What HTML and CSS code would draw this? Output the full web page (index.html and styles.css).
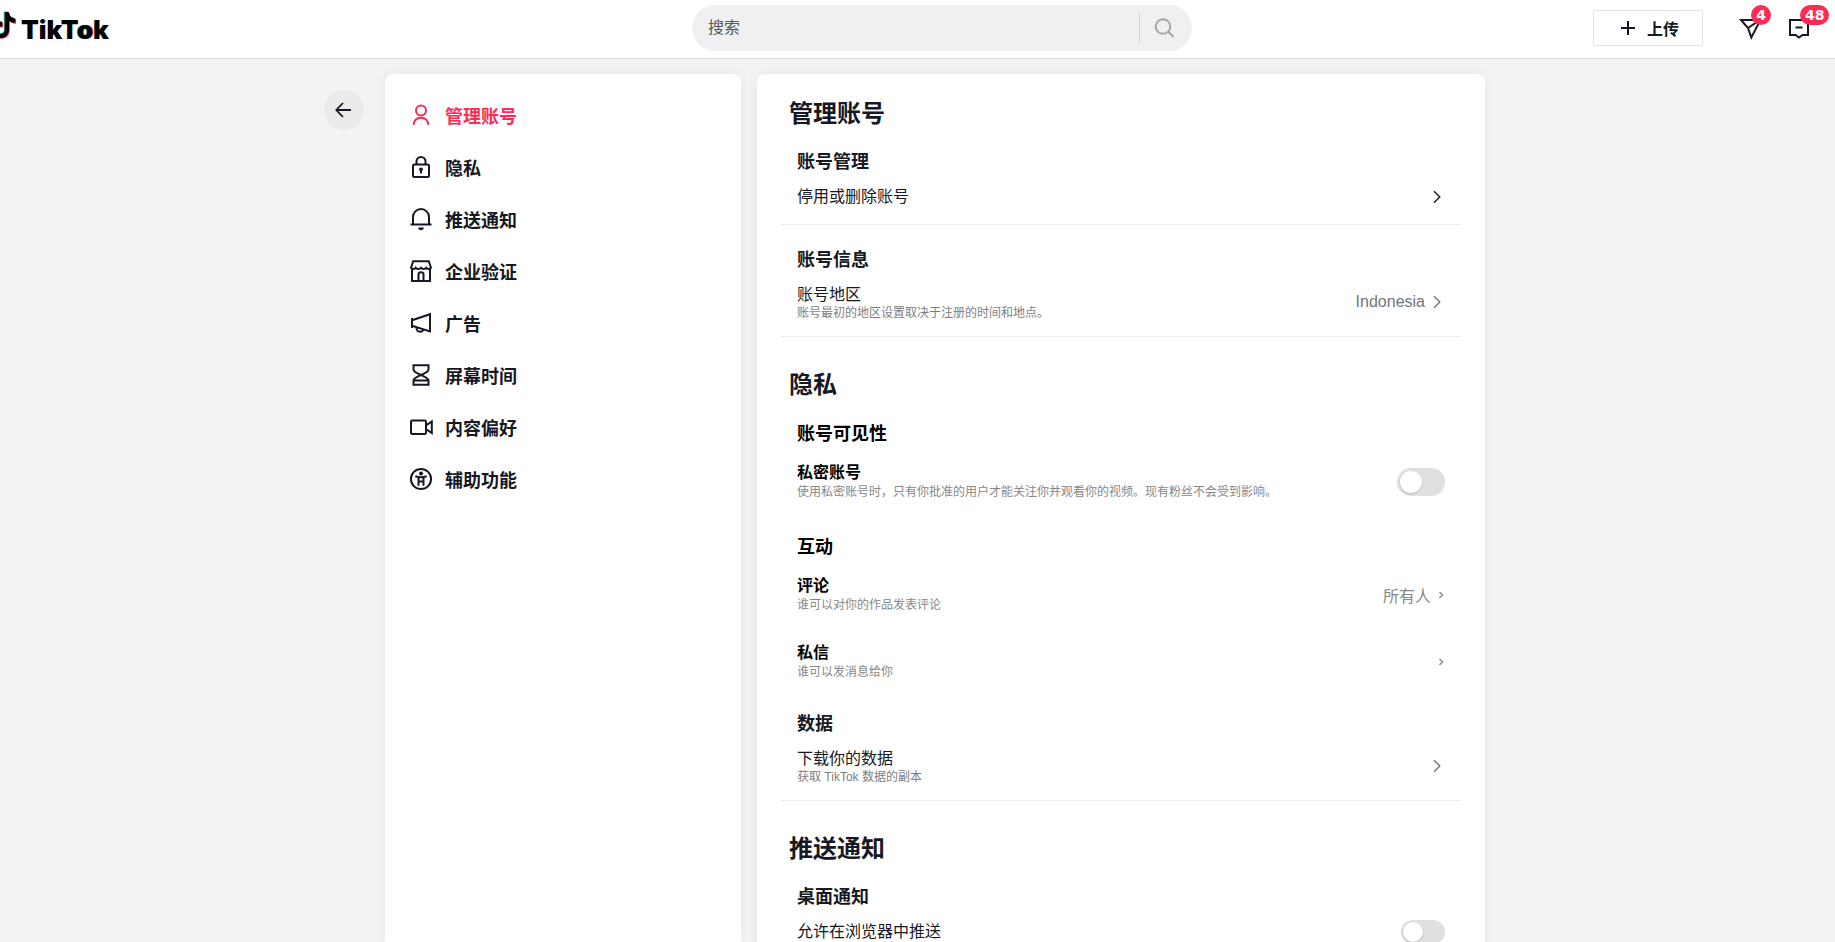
FILE: index.html
```html
<!DOCTYPE html>
<html lang="zh-CN">
<head>
    <meta charset="UTF-8">
    <meta name="viewport" content="width=device-width, initial-scale=1.0">
    <title>TikTok</title>
    <link rel="stylesheet" href="styles.css">
</head>
<body>
    <header class="header">
        <a class="logo" href="#" aria-label="TikTok">
            <svg class="logo-note" viewBox="-1 -1 26 26" aria-hidden="true">
                <defs>
                    <path id="note" d="M12.525.02c1.31-.02 2.61-.01 3.91-.02.08 1.53.63 3.09 1.75 4.17 1.12 1.11 2.7 1.62 4.24 1.79v4.03c-1.44-.05-2.89-.35-4.2-.97-.57-.26-1.1-.59-1.62-.93-.01 2.92.01 5.84-.02 8.75-.08 1.4-.54 2.79-1.35 3.94-1.31 1.92-3.58 3.17-5.91 3.21-1.43.08-2.86-.31-4.08-1.03-2.02-1.19-3.44-3.37-3.65-5.71-.02-.5-.03-1-.01-1.49.18-1.9 1.12-3.72 2.58-4.96 1.66-1.44 3.98-2.13 6.15-1.72.02 1.48-.04 2.96-.04 4.44-.99-.32-2.15-.23-3.02.37-.63.41-1.11 1.04-1.36 1.75-.21.51-.15 1.07-.14 1.61.24 1.64 1.82 3.02 3.5 2.87 1.12-.01 2.19-.66 2.77-1.61.19-.33.4-.67.41-1.06.1-1.79.06-3.57.07-5.36.01-4.03-.01-8.05.02-12.07z"/>
                </defs>
                <use href="#note" x="-0.8" y="-0.8" fill="#25f4ee"/>
                <use href="#note" x="0.8" y="0.8" fill="#fe2c55"/>
                <use href="#note" fill="#000"/>
            </svg>
            <span class="logo-text">TikT<span class="logo-o">o</span>k</span>
        </a>

        <form class="search">
            <input class="search-input" type="search" placeholder="搜索" aria-label="搜索">
            <button class="search-btn" type="button" aria-label="搜索">
                <svg width="24" height="24" viewBox="0 0 24 24" fill="none" stroke="currentColor" stroke-width="2"><circle cx="10" cy="10.5" r="7.3"/><path d="M15.3 15.8l5.2 5.2"/></svg>
            </button>
        </form>

        <div class="actions">
            <button class="upload-btn" type="button">
                <svg width="14" height="14" viewBox="0 0 14 14" stroke="currentColor" stroke-width="2"><path d="M7 0v14M0 7h14"/></svg>
                上传
            </button>
            <a class="action" href="#" aria-label="私信">
                <svg width="24" height="24" viewBox="0 0 24 24" fill="none" stroke="currentColor" stroke-width="2"><path d="M3 4h19.5L13.3 21.5 10 12z"/><path d="M10 12l12-8"/></svg>
                <span class="badge">4</span>
            </a>
            <a class="action" href="#" aria-label="收件箱">
                <svg width="24" height="24" viewBox="0 0 24 24" fill="none" stroke="currentColor" stroke-width="2"><path d="M3 4h18v15h-5.5L12 21.5 8.5 19H3z"/><path d="M8.5 11.5h7"/></svg>
                <span class="badge">48</span>
            </a>
        </div>
    </header>

    <main class="page">
        <button class="back-btn" type="button" aria-label="返回">
            <svg width="18" height="18" viewBox="0 0 18 18" fill="none" stroke="currentColor" stroke-width="1.8"><path d="M8 2L1.300 9 8 16M1.500 9H16"/></svg>
        </button>

        <nav class="sidebar card">
            <a class="nav-item active" href="#account">
                <svg class="nav-icon" viewBox="0 0 24 24"><circle cx="12" cy="7.5" r="5"/><path d="M4.500 21.800c.6-4.400 3.500-7 7.500-7s6.900 2.600 7.500 7"/></svg>
                管理账号
            </a>
            <a class="nav-item" href="#privacy">
                <svg class="nav-icon" viewBox="0 0 24 24"><rect x="4" y="9.500" width="16" height="12.500" rx="1.500"/><path d="M7.500 9.500V6.500a4.500 4.500 0 0 1 9 0v3"/><circle class="solid" cx="12" cy="14.300" r="1.900"/><path d="M12 14.500v4"/></svg>
                隐私
            </a>
            <a class="nav-item" href="#push">
                <svg class="nav-icon" viewBox="0 0 24 24"><path d="M1.500 17.500h21M4 17.500V10a8 8 0 0 1 16 0v7.500"/><path class="solid" d="M9 20.500h6c-.4 1.800-1.500 2.700-3 2.700s-2.600-.9-3-2.700z"/></svg>
                推送通知
            </a>
            <a class="nav-item" href="#business">
                <svg class="nav-icon" viewBox="0 0 24 24"><path d="M4.200 2.200h15.600l2.200 6.600c-.8 1.600-3.600 1.800-4.700 0-1 1.600-4.200 1.600-5.300 0-1.100 1.600-4.300 1.600-5.300 0-1.100 1.800-3.900 1.600-4.700 0z"/><path d="M3 9v13h18V9M9.500 22v-6.500c0-1.400 1-2.300 2.500-2.300s2.500.9 2.500 2.300V22"/></svg>
                企业验证
            </a>
            <a class="nav-item" href="#ads">
                <svg class="nav-icon" viewBox="0 0 24 24"><path d="M3 9.200L21 3.200v17.300L3 14.800zM3 7v10"/><path d="M7.500 16.400c-.3 2.700 1.200 4.300 3.800 4.300 1.500 0 2.500-.7 3-1.900"/></svg>
                广告
            </a>
            <a class="nav-item" href="#screen-time">
                <svg class="nav-icon" viewBox="0 0 24 24"><path d="M4.500 2.200h15v4.300c0 2.500-3.500 3.700-7.500 5.500-4-1.800-7.500-3-7.500-5.500z"/><path d="M4.500 21.800h15v-4.300c0-2.500-3.500-3.700-7.500-5.500-4 1.800-7.500 3-7.500 5.500zM4.500 17.500h15"/></svg>
                屏幕时间
            </a>
            <a class="nav-item" href="#content">
                <svg class="nav-icon" viewBox="0 0 24 24"><rect x="2" y="5.500" width="15" height="13.500" rx="1.200"/><path d="M17 10.500l5.800-4v11.500L17 14"/></svg>
                内容偏好
            </a>
            <a class="nav-item" href="#accessibility">
                <svg class="nav-icon" viewBox="0 0 24 24"><circle cx="12" cy="12" r="10.100"/><circle class="solid" cx="12" cy="6.500" r="2"/><path d="M6.300 9.300c3.500 1.200 7.900 1.200 11.400 0M9.500 10v8.800M14.500 10v8.800M9.500 14.500h5"/></svg>
                辅助功能
            </a>
        </nav>

        <div class="content card">
            <section id="account">
                <h1 class="title">管理账号</h1>
                <div class="group">
                    <h2 class="subtitle">账号管理</h2>
                    <a class="row" href="#">
                        <span class="row-name">停用或删除账号</span>
                        <span class="control dark">
                            <svg class="chevron" viewBox="0 0 16 16"><path d="M5 2.200L10.800 8 5 13.800"/></svg>
                        </span>
                    </a>
                </div>
                <div class="group">
                    <h2 class="subtitle">账号信息</h2>
                    <a class="row" href="#">
                        <span class="row-text">
                            <span class="row-name">账号地区</span>
                            <span class="row-desc">账号最初的地区设置取决于注册的时间和地点。</span>
                        </span>
                        <span class="control">Indonesia
                            <svg class="chevron" viewBox="0 0 16 16"><path d="M5 2.200L10.800 8 5 13.800"/></svg>
                        </span>
                    </a>
                </div>
            </section>

            <section id="privacy">
                <h1 class="title">隐私</h1>
                <div class="privacy">
                    <div class="group">
                        <h2 class="subtitle">账号可见性</h2>
                        <div class="row">
                            <label class="row-text" for="private-account">
                                <span class="row-name">私密账号</span>
                                <span class="row-desc">使用私密账号时，只有你批准的用户才能关注你并观看你的视频。现有粉丝不会受到影响。</span>
                            </label>
                            <input class="switch control" type="checkbox" id="private-account">
                        </div>
                    </div>
                    <div class="group">
                        <h2 class="subtitle">互动</h2>
                        <a class="row" href="#">
                            <span class="row-text">
                                <span class="row-name">评论</span>
                                <span class="row-desc">谁可以对你的作品发表评论</span>
                            </span>
                            <span class="control">所有人
                                <svg class="chevron-small" viewBox="0 0 8 8"><path d="M2.500 1L5.500 4 2.500 7"/></svg>
                            </span>
                        </a>
                        <a class="row" href="#">
                            <span class="row-text">
                                <span class="row-name">私信</span>
                                <span class="row-desc">谁可以发消息给你</span>
                            </span>
                            <span class="control">
                                <svg class="chevron-small" viewBox="0 0 8 8"><path d="M2.500 1L5.500 4 2.500 7"/></svg>
                            </span>
                        </a>
                    </div>
                </div>
                <div class="group">
                    <h2 class="subtitle">数据</h2>
                    <a class="row" href="#">
                        <span class="row-text">
                            <span class="row-name">下载你的数据</span>
                            <span class="row-desc">获取 TikTok 数据的副本</span>
                        </span>
                        <span class="control">
                            <svg class="chevron" viewBox="0 0 16 16"><path d="M5 2.200L10.800 8 5 13.800"/></svg>
                        </span>
                    </a>
                </div>
            </section>

            <section id="push">
                <h1 class="title">推送通知</h1>
                <div class="group">
                    <h2 class="subtitle">桌面通知</h2>
                    <div class="row">
                        <label class="row-name" for="browser-push">允许在浏览器中推送</label>
                        <input class="switch switch-small" type="checkbox" id="browser-push">
                    </div>
                </div>
            </section>
        </div>
    </main>
</body>
</html>
```

FILE: styles.css
```css
* {
    box-sizing: border-box;
}

body {
    margin: 0;
    height: 100vh;
    display: flex;
    flex-direction: column;
    overflow: hidden;
    background-color: #f3f3f3;
    color: #161823;
    font-family: "Liberation Sans", "Noto Sans CJK SC", sans-serif;
    font-size: 16px;
}

a {
    color: inherit;
    text-decoration: none;
}

button, input {
    font: inherit;
    color: inherit;
}

button {
    border: none;
    padding: 0;
    cursor: pointer;
}

svg {
    display: block;
    flex-shrink: 0;
}

/* Header */
.header {
    display: grid;
    grid-template-columns: 1fr 500px 1fr;
    align-items: center;
    flex-shrink: 0;
    height: 59px;
    padding: 0 24px 2px 73px;
    background-color: #fff;
    border-bottom: 1px solid #d9d9d9;
}

.logo {
    display: flex;
    align-items: flex-start;
    gap: 3px;
    margin-left: -83px;
    color: #000;
}
.logo-note { width: 28px; height: 28px; }
.logo-text {
    font-family: Inter, sans-serif;
    font-size: 26px;
    font-weight: 900;
    line-height: 32px;
    padding-top: 3px;
}
.logo-o { text-shadow: -1px 0 #25f4ee, 1px 0 #fe2c55; }

.search {
    display: flex;
    align-items: center;
    height: 46px;
    border-radius: 23px;
    background-color: #f0f0f0;
    overflow: hidden;
}
.search-input {
    flex: 1;
    min-width: 0;
    height: 46px;
    padding: 0 16px;
    border: none;
    outline: none;
    background: transparent;
}
.search-input::placeholder { color: #55565e; }
.search-btn {
    display: flex;
    align-items: center;
    width: 53px;
    height: 28px;
    padding-left: 13px;
    border-left: 1px solid #d0d0d2;
    background: transparent;
    color: #a6a7ab;
}

.actions {
    display: flex;
    align-items: center;
    justify-content: flex-end;
}
.upload-btn {
    display: flex;
    align-items: center;
    justify-content: center;
    gap: 12px;
    width: 110px;
    height: 36px;
    margin-right: 10px;
    padding-left: 4px;
    border: 1px solid #e3e3e4;
    border-radius: 2px;
    background-color: #fff;
    font-weight: bold;
}
.action {
    position: relative;
    margin-left: 25px;
}
.badge {
    position: absolute;
    left: 13px;
    top: -11px;
    min-width: 20px;
    padding: 0 5px;
    border-radius: 10px;
    background-color: #fe2c55;
    color: #fff;
    font-family: "DejaVu Sans", sans-serif;
    font-size: 14px;
    font-weight: bold;
    line-height: 20px;
    text-align: center;
}

/* Page */
.page {
    display: flex;
    justify-content: center;
    flex: 1;
    min-height: 0;
    padding: 15px 26px 0 0;
    overflow-y: auto;
    scrollbar-width: none;
}

.back-btn {
    display: flex;
    align-items: center;
    justify-content: center;
    flex-shrink: 0;
    width: 40px;
    height: 40px;
    margin: 16px 21px 0 0;
    border-radius: 50%;
    background-color: #ebebeb;
}

.card {
    align-self: flex-start;
    background-color: #fff;
    border-radius: 8px 8px 0 0;
    box-shadow: 0 0 12px rgba(0, 0, 0, 0.06);
}

.sidebar {
    flex: 0 1 356px;
    min-height: 100%;
    margin-right: 16px;
    padding: 15px 24px;
}
.nav-item {
    display: flex;
    align-items: center;
    gap: 12px;
    height: 52px;
    font-size: 18px;
    font-weight: bold;
}
.nav-item.active { color: #fe2c55; }
.nav-icon {
    width: 24px;
    height: 24px;
    fill: none;
    stroke: currentColor;
    stroke-width: 2;
}
.nav-icon .solid { fill: currentColor; stroke: none; }

.content {
    flex: 0 1 728px;
    padding: 0 24px 32px;
}

.title {
    margin: 0;
    padding: 0 8px;
    font-size: 24px;
    line-height: 32px;
}
section { padding-top: 32px; }
section:first-child { padding-top: 24px; }

.group { padding-top: 19px; }
.group + .group { padding-top: 22px; }
.subtitle {
    margin: 0;
    padding: 0 16px;
    font-size: 18px;
    line-height: 26px;
}

.row {
    display: flex;
    align-items: center;
    justify-content: space-between;
    padding: 11px 16px 16px;
    border-bottom: 1px solid #ededee;
}
.row-name {
    display: block;
    line-height: 22px;
}
.row-desc {
    display: block;
    color: #7c7d83;
    font-size: 12px;
    line-height: 14px;
}

.control {
    display: flex;
    align-items: center;
    gap: 4px;
    color: #73747b;
}
.control.dark { color: #161823; }

.chevron, .chevron-small {
    fill: none;
    stroke: currentColor;
}
.chevron {
    width: 16px;
    height: 16px;
    stroke-width: 1.4;
}
.chevron-small {
    width: 8px;
    height: 8px;
    stroke-width: 1.4;
}

/* Privacy settings */
.privacy, .privacy .group {
    display: flex;
    flex-direction: column;
}
.privacy {
    gap: 1px;
    padding: 1px 0;
    color: #000;
}
.privacy .row {
    padding: 15px 16px 11px;
    border-bottom: none;
}
.privacy .row + .row { margin-top: 3px; }
.privacy .row-name { font-weight: bold; }
.privacy .row-desc {
    color: #888;
    line-height: 16px;
}
.privacy .control {
    gap: 6px;
    margin-top: 2px;
    color: #888;
}

/* Switches */
.switch {
    appearance: none;
    display: block;
    flex-shrink: 0;
    width: 48px;
    height: 28px;
    margin: 0;
    padding: 3px;
    border-radius: 14px;
    background-color: #e0e0e0;
    cursor: pointer;
}
.switch::before {
    content: "";
    display: block;
    width: 22px;
    height: 22px;
    border-radius: 50%;
    background-color: #fff;
    box-shadow: 0 1px 2px rgba(0, 0, 0, 0.2);
}
.switch:checked { background-color: #0be09b; }
.switch:checked::before { margin-left: auto; }

.switch-small {
    width: 44px;
    height: 24px;
    margin: -1px 0;
    padding: 2px;
}
.switch-small::before {
    width: 20px;
    height: 20px;
}
```
